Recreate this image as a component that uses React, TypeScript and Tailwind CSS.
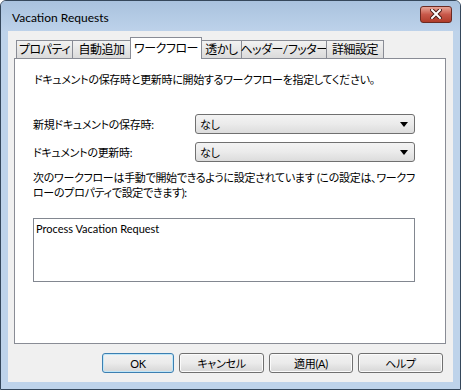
import React from "react";

const tabs = [
  { label: "プロパティ", w: "w-[57px]" },
  { label: "自動追加", w: "w-[59px]" },
  { label: "ワークフロー", w: "w-[72px]", active: true },
  { label: "透かし", w: "w-[41px]" },
  { label: "ヘッダー/フッター", w: "w-[86px]" },
  { label: "詳細設定", w: "w-[58px]" },
];

function Select() {
  return (
    <div className="flex h-[20px] w-[220px] items-center justify-between rounded-[3px] border border-[#707070] bg-gradient-to-b from-[#f3f3f3] via-[#ebebeb] to-[#dcdcdc] pl-[4px] pr-[6px]">
      <span className="tracking-[-0.3px]">なし</span>
      <svg width="8" height="5" viewBox="0 0 8 5">
        <path d="M0 0h8L4 5z" fill="#000" />
      </svg>
    </div>
  );
}

function Button({ label, w, primary = false }: { label: string; w: string; primary?: boolean }) {
  return (
    <button
      className={
        w +
        " h-[20px] rounded-[3px] border bg-gradient-to-b from-[#f2f2f2] via-[#ebebeb] to-[#d6d6d6] tracking-[-0.3px] " +
        (primary
          ? "border-[#3c7fb1] shadow-[inset_0_0_0_1px_#bfe6f8]"
          : "border-[#707070] shadow-[inset_0_0_0_1px_#fbfbfb]")
      }
    >
      {label}
    </button>
  );
}

export default function App() {
  return (
    <div className="h-[390px] w-[461px] overflow-hidden rounded-t-[6px] border border-[#35475b] bg-[#bed3ea] font-['Lato','Noto_Sans_CJK_JP',sans-serif] text-[11px] leading-[15px] text-black [font-feature-settings:'palt']">
      {/* title bar */}
      <div className="flex h-[30px] items-center justify-between bg-gradient-to-b from-[#a9c2de] to-[#bdd2ea] pl-[11px] pr-[8px]">
        <span className="pt-[2px] text-[12px]">Vacation Requests</span>
        <div className="mb-[4px] flex h-[17px] w-[32px] items-center justify-center rounded-[3px] border border-[#6b2a22] bg-gradient-to-b from-[#e6a497] via-[#c8584a] to-[#b03c2a]">
          <svg width="12" height="10" viewBox="0 0 12 10">
            <path d="M2 1l8 8M10 1L2 9" stroke="#4a1c16" strokeWidth="4" strokeLinecap="square" />
            <path d="M2 1l8 8M10 1L2 9" stroke="#fff" strokeWidth="2" strokeLinecap="square" />
          </svg>
        </div>
      </div>

      {/* content */}
      <div className="mx-[7px] flex h-[351px] flex-col bg-[#f0f0f0] pl-[6px] pr-[7px] pt-[6px]">
        <div className="flex h-[21px] items-end pl-[2px] tracking-[-0.5px]">
          {tabs.map((t, i) =>
            t.active ? (
              <div
                key={t.label}
                className={t.w + " relative z-10 -mb-px -ml-px flex h-[22px] items-start justify-center whitespace-nowrap border border-b-0 border-[#898c95] bg-white pt-[3px] text-[12px]"}
              >
                {t.label}
              </div>
            ) : (
              <div
                key={t.label}
                className={
                  t.w +
                  (i === 0 ? "" : " -ml-px") +
                  " flex h-[18px] items-center justify-center whitespace-nowrap border border-b-0 border-[#898c95] bg-gradient-to-b from-[#f2f2f2] to-[#dbdbdb] text-[12px]"
                }
              >
                {t.label}
              </div>
            )
          )}
        </div>

        <div className="flex h-[286px] flex-col border border-[#898c95] bg-white pl-[18px] pt-[13px]">
          <p className="pl-[1px] tracking-[-0.3px]">ドキュメントの保存時と更新時に開始するワークフローを指定してください。</p>
          <div className="mt-[27px] flex items-center">
            <span className="w-[162px] tracking-[-0.3px]">新規ドキュメントの保存時:</span>
            <Select />
          </div>
          <div className="mt-[8px] flex items-center">
            <span className="w-[162px] tracking-[-0.3px]">ドキュメントの更新時:</span>
            <Select />
          </div>
          <p className="mt-[8px] whitespace-nowrap tracking-[-0.3px]">
            <span className="block">次のワークフローは手動で開始できるように設定されています (この設定は、ワークフ</span>
            <span className="block">ローのプロパティで設定できます):</span>
          </p>
          <div className="mt-[18px] h-[64px] w-[382px] border border-[#828790] bg-white pl-[2px] pt-[2px]">
            Process Vacation Request
          </div>
        </div>

        <div className="mt-[9px] flex justify-end gap-[5px] pr-[3px]">
          <Button label="OK" w="w-[72px]" primary />
          <Button label="キャンセル" w="w-[85px]" />
          <Button label="適用(A)" w="w-[84px]" />
          <Button label="ヘルプ" w="w-[85px]" />
        </div>
      </div>
    </div>
  );
}
